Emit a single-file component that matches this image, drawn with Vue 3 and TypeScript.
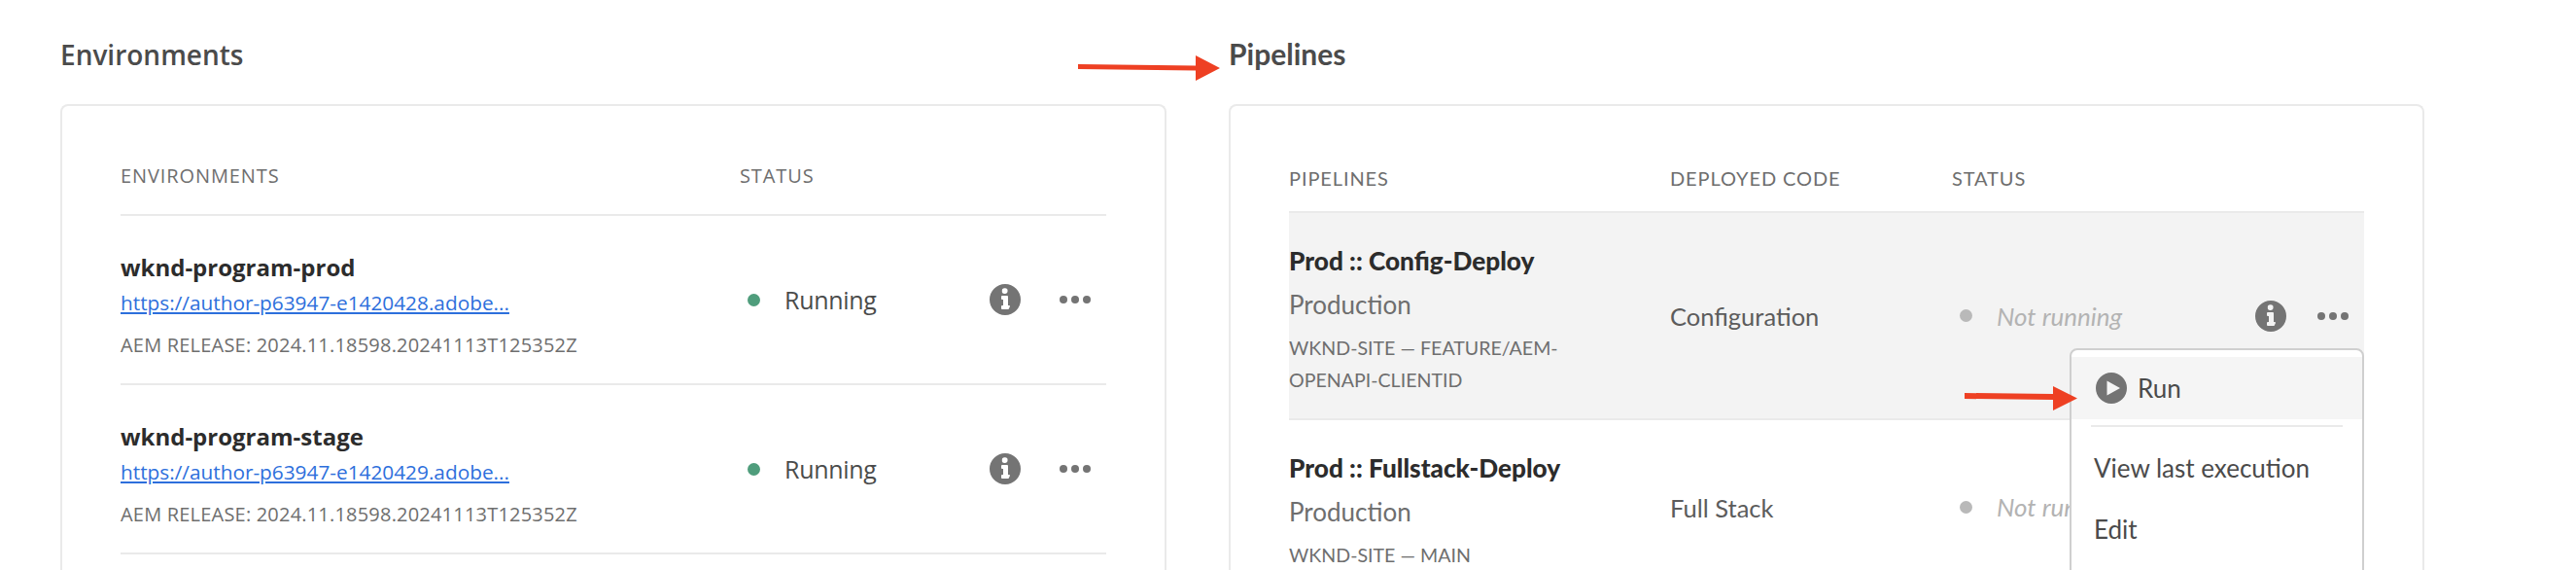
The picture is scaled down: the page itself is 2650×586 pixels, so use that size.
<template>
  <div class="page">
    <section class="panel env-panel">
      <h2>Environments</h2>
      <div class="card">
        <div class="head env-grid">
          <span>ENVIRONMENTS</span>
          <span>STATUS</span>
        </div>
        <div v-for="env in environments" :key="env.name" class="env-row env-grid">
          <div class="env-info">
            <div class="name">{{ env.name }}</div>
            <a class="link" href="#">{{ env.url }}</a>
            <div class="release">AEM RELEASE: 2024.11.18598.20241113T125352Z</div>
          </div>
          <div class="status running"><i class="dot"></i>Running</div>
          <div class="actions env-actions">
            <svg viewBox="0 0 36 36" width="36" height="36"><path :d="infoPath" /></svg>
            <svg viewBox="0 0 36 36" width="36" height="36"><circle cx="6" cy="18" r="4" /><circle cx="18" cy="18" r="4" /><circle cx="30" cy="18" r="4" /></svg>
          </div>
        </div>
      </div>
    </section>

    <section class="panel pipe-panel">
      <h2>Pipelines</h2>
      <div class="card">
        <div class="head pipe-head pipe-grid">
          <span>PIPELINES</span>
          <span>DEPLOYED CODE</span>
          <span>STATUS</span>
        </div>
        <div v-for="(p, i) in pipelines" :key="p.name" class="pipe-row pipe-grid" :class="{ active: i === 0 }">
          <div class="pipe-info">
            <div class="name">{{ p.name }}</div>
            <div class="kind">Production</div>
            <div class="branch">{{ p.branch }}</div>
          </div>
          <div class="code">{{ p.code }}</div>
          <div class="status idle"><i class="dot"></i>Not running</div>
          <div class="actions pipe-actions">
            <svg viewBox="0 0 36 36" width="36" height="36"><path :d="infoPath" /></svg>
            <svg viewBox="0 0 36 36" width="36" height="36"><circle cx="6" cy="18" r="4" /><circle cx="18" cy="18" r="4" /><circle cx="30" cy="18" r="4" /></svg>
          </div>
          <div v-if="i === 0" class="menu">
            <div class="menu-item run">
              <svg viewBox="0 0 36 36" width="36" height="36"><path fill-rule="evenodd" d="M18 2a16 16 0 1 0 0 32a16 16 0 0 0 0-32ZM13.5 10.5v15L27 18Z" /></svg>
              Run
            </div>
            <div class="menu-sep"></div>
            <div class="menu-item">View last execution</div>
            <div class="menu-item">Edit</div>
          </div>
        </div>
      </div>
    </section>

    <!-- annotation arrows drawn over the screenshot -->
    <svg class="arrows" viewBox="0 0 2650 586" width="2650" height="586">
      <path d="M1109 66 L1230 67.5 L1230 57 L1255 70 L1230 83 L1230 72.5 L1109 71 Z" />
      <path d="M2021 404 L2112 405 L2112 397 L2137 409.5 L2112 422 L2112 411 L2021 410 Z" />
    </svg>
  </div>
</template>

<script setup lang="ts">
const infoPath =
  "M18,2A16,16,0,1,0,34,18,16,16,0,0,0,18,2Zm-.3,4.3a2.718,2.718,0,0,1,2.864,2.824,2.664,2.664,0,0,1-2.864,2.863A2.705,2.705,0,0,1,14.8,9.123,2.717,2.717,0,0,1,17.7,6.3ZM22,27a1,1,0,0,1-1,1H15a1,1,0,0,1-1-1V25a1,1,0,0,1,1-1h1V18H15a1,1,0,0,1-1-1V15a1,1,0,0,1,1-1h5a1,1,0,0,1,1,1v9h1a1,1,0,0,1,1,1Z";

const environments = [
  { name: "wknd-program-prod", url: "https://author-p63947-e1420428.adobe..." },
  { name: "wknd-program-stage", url: "https://author-p63947-e1420429.adobe..." },
];

const pipelines = [
  { name: "Prod :: Config-Deploy", branch: "WKND-SITE — FEATURE/AEM-OPENAPI-CLIENTID", code: "Configuration" },
  { name: "Prod :: Fullstack-Deploy", branch: "WKND-SITE — MAIN", code: "Full Stack" },
];
</script>

<style>
html,
body {
  margin: 0;
  background: #fff;
  overflow: hidden;
}
</style>

<style scoped>
.page {
  position: relative;
  display: flex;
  width: 2650px;
  height: 586px;
  overflow: hidden;
  padding: 36px 0 0 62px;
  box-sizing: border-box;
  font-family: "Open Sans", "Noto Sans", sans-serif;
  color: #4b4b4b;
}
.env-panel {
  width: 1138px;
  margin-right: 64px;
}
.pipe-panel {
  width: 1230px;
  font-family: "Lato", "Noto Sans", sans-serif;
}
h2 {
  margin: 0 0 31px;
  font-size: 28px;
  line-height: 40px;
  font-weight: 600;
  color: #4b4b4b;
}
.pipe-panel h2 {
  margin-top: -1px;
  margin-bottom: 32px;
  font-size: 30px;
  font-weight: 700;
}
.card {
  border: 2px solid #eaeaea;
  border-bottom: none;
  border-radius: 8px 8px 0 0;
  height: 600px;
  box-sizing: border-box;
  padding: 57px 60px 0;
}
.env-grid {
  display: grid;
  grid-template-columns: 637px 1fr auto;
  align-items: center;
}
.pipe-grid {
  display: grid;
  grid-template-columns: 392px 290px 1fr auto;
  align-items: center;
}
.head {
  font-size: 20px;
  line-height: 30px;
  letter-spacing: 0.9px;
  color: #6e6e6e;
  padding-bottom: 24px;
  border-bottom: 2px solid #eaeaea;
}
.pipe-head {
  padding-top: 2px;
  padding-bottom: 19px;
  letter-spacing: 0.9px;
}
.env-row {
  border-bottom: 2px solid #eaeaea;
}
.env-info {
  padding: 35px 0 21px;
}
.name {
  font-size: 24px;
  line-height: 36px;
  font-weight: 700;
  color: #2c2c2c;
}
.pipe-info .name {
  font-size: 26.2px;
  font-weight: 900;
}
.link {
  display: block;
  width: fit-content;
  font-size: 20.8px;
  line-height: 36px;
  color: #2d6fdc;
}
.release {
  margin-top: 8px;
  font-size: 20px;
  line-height: 36px;
  letter-spacing: 0.2px;
  color: #6e6e6e;
}
.status {
  display: flex;
  align-items: center;
  padding-left: 8px;
  font-size: 25px;
  letter-spacing: -0.3px;
}
.dot {
  width: 13px;
  height: 13px;
  border-radius: 50%;
  margin-right: 25px;
}
.running .dot {
  background: #4f9d7c;
}
.idle {
  font-size: 26px;
  font-style: italic;
  letter-spacing: 0;
  color: #b3b3b3;
}
.idle .dot {
  background: #b9b9b9;
}
.actions {
  display: flex;
  align-items: center;
  padding-right: 14px;
  fill: #747474;
}
.env-actions {
  gap: 36px;
}
.pipe-actions {
  gap: 28px;
}
.pipe-row {
  position: relative;
  border-bottom: 2px solid #eaeaea;
}
.pipe-row.active {
  background: #f3f3f3;
}
.pipe-info {
  padding: 31px 0 23px;
}
.kind {
  margin-top: 9px;
  font-size: 26px;
  line-height: 36px;
  color: #6e6e6e;
}
.branch {
  margin-top: 10px;
  width: 360px;
  font-size: 19.6px;
  line-height: 33px;
  color: #6e6e6e;
}
.code {
  padding-top: 1px;
  font-size: 25.5px;
  color: #5c5c5c;
}
.menu {
  position: absolute;
  z-index: 1;
  top: 139px;
  right: 0;
  width: 303px;
  height: 320px;
  box-sizing: border-box;
  padding-top: 7px;
  background: #fff;
  border: 2px solid #cfcfcf;
  border-radius: 8px;
  font-size: 26px;
  color: #4b4b4b;
}
.menu-item {
  display: flex;
  align-items: center;
  height: 63px;
  padding-left: 23px;
}
.menu-item svg {
  margin-right: 9px;
  fill: #747474;
}
.run {
  height: 64px;
  background: #f5f5f5;
}
.menu-sep {
  height: 2px;
  margin: 6px 20px 10px;
  background: #eaeaea;
}
.arrows {
  position: absolute;
  z-index: 2;
  top: 0;
  left: 0;
  fill: #ee4023;
  pointer-events: none;
}
</style>
